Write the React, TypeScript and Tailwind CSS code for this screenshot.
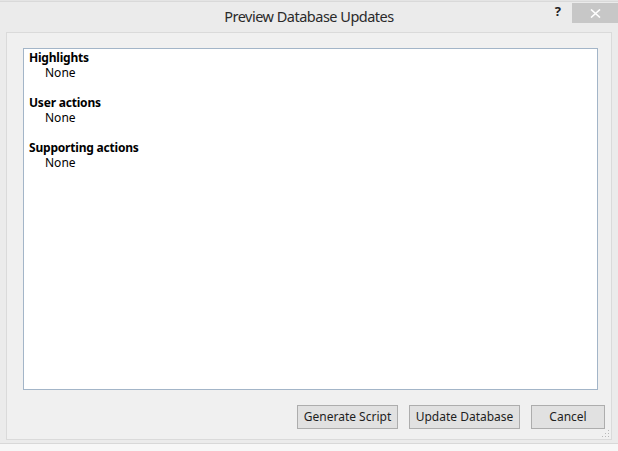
import React from "react";

const sections = [
  { title: "Highlights", value: "None" },
  { title: "User actions", value: "None" },
  { title: "Supporting actions", value: "None" },
];

function Btn({ label, w }: { label: string; w: string }) {
  return (
    <button
      className={`${w} h-[24px] border border-[#adadad] bg-[#e1e1e1] text-[12px] text-[#1e1e1e] leading-none`}
    >
      {label}
    </button>
  );
}

export default function App() {
  return (
    <div
      className="w-[618px] h-[451px] bg-[#ebebeb] flex flex-col overflow-hidden"
      style={{ fontFamily: '"Noto Sans", "Open Sans", sans-serif' }}
    >
      <div className="h-[2px] bg-[#e4e4e4] border-b border-[#d9d9d9]" />
      <div className="relative h-[30px] flex items-center justify-center">
        <span className="text-[14.5px] tracking-[-0.5px] text-[#2a2a2a] mt-[-1px]">Preview Database Updates</span>
        <div className="absolute right-0 top-[1px] flex items-start">
          <span className="text-[13px] font-bold text-[#222] mr-[11px] mt-[-1px]">?</span>
          <div className="w-[46px] h-[20px] bg-[#c7c7c7] flex items-center justify-center">
            <svg width="11" height="9" viewBox="0 0 11 9">
              <path d="M1 0.5 L10 8.5 M10 0.5 L1 8.5" stroke="#ffffff" strokeWidth="1.6" />
            </svg>
          </div>
        </div>
      </div>
      <div className="mx-[6px] h-[408px] border border-[#dadada] bg-[#f0f0f0] flex flex-col relative">
        <div className="mt-[15px] ml-[16px] mr-[13px] h-[342px] border border-[#a3b5c8] bg-white pl-[5px] pt-[1px] flex flex-col gap-[15px]">
          {sections.map((s) => (
            <div key={s.title} className="flex flex-col text-[12px] leading-[15px] text-black">
              <span className="font-bold tracking-[-0.2px]">{s.title}</span>
              <span className="pl-[16px]">{s.value}</span>
            </div>
          ))}
        </div>
        <div className="flex justify-end gap-[11px] mt-[15px] pr-[6px]">
          <Btn label="Generate Script" w="w-[101px]" />
          <Btn label="Update Database" w="w-[111px]" />
          <Btn label="Cancel" w="w-[74px]" />
        </div>
        <svg className="absolute right-[1px] bottom-[1px]" width="10" height="10" viewBox="0 0 10 10">
          {[
            [8, 2],
            [8, 5],
            [5, 5],
            [8, 8],
            [5, 8],
            [2, 8],
          ].map(([x, y]) => (
            <rect key={`${x}-${y}`} x={x} y={y} width="1" height="1" fill="#b8b8b8" />
          ))}
        </svg>
      </div>
      <div className="mt-[3px] flex-1 border-t border-[#d8d8d8] bg-[#f7f7f7]" />
    </div>
  );
}
